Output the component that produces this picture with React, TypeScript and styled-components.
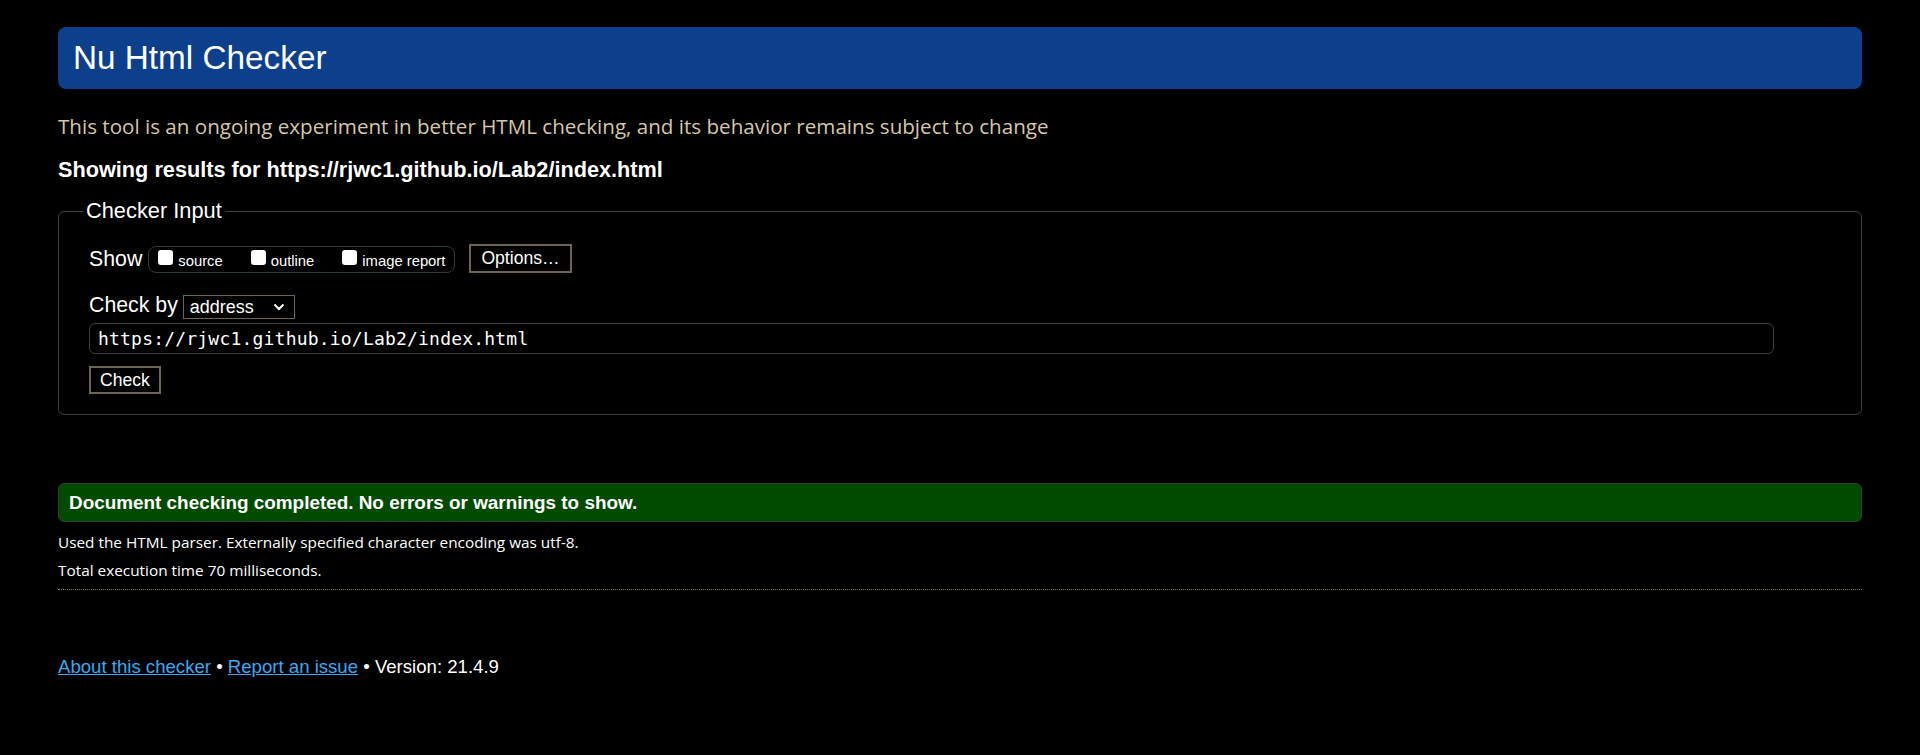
import React from "react";
import styled, { createGlobalStyle } from "styled-components";

const GlobalStyle = createGlobalStyle`
  html, body {
    margin: 0;
    padding: 0;
    background: #000;
  }
  body {
    font-family: "Liberation Sans", Arial, sans-serif;
    color: #fff;
  }
`;

const options = ["source", "outline", "image report"];

const App: React.FC = () => {
  return (
    <Page>
      <GlobalStyle />
      <Header>
        <Title>Nu Html Checker</Title>
      </Header>
      <Intro>
        This tool is an ongoing experiment in better HTML checking, and its
        behavior remains subject to change
      </Intro>
      <ResultsFor>Showing results for https://rjwc1.github.io/Lab2/index.html</ResultsFor>

      <InputFieldset>
        <Legend>Checker Input</Legend>
        <Row>
          <RowLabel>Show</RowLabel>
          <ShowGroup>
            {options.map((opt) => (
              <ShowOption key={opt}>
                <Box />
                <OptionText>{opt}</OptionText>
              </ShowOption>
            ))}
          </ShowGroup>
          <OptionsButton>Options…</OptionsButton>
        </Row>
        <Row $top={18}>
          <RowLabel>Check by</RowLabel>
          <Select>
            <span>address</span>
            <svg width="12" height="8" viewBox="0 0 12 8">
              <path d="M1.5 1.5 L6 6 L10.5 1.5" fill="none" stroke="#fff" strokeWidth="2" />
            </svg>
          </Select>
        </Row>
        <UrlInput>https://rjwc1.github.io/Lab2/index.html</UrlInput>
        <CheckButton>Check</CheckButton>
      </InputFieldset>

      <SuccessBar>Document checking completed. No errors or warnings to show.</SuccessBar>
      <Details>Used the HTML parser. Externally specified character encoding was utf-8.</Details>
      <Details $top={8}>Total execution time 70 milliseconds.</Details>
      <Rule />

      <Footer>
        <FooterLink>About this checker</FooterLink> • <FooterLink>Report an issue</FooterLink> •
        Version: 21.4.9
      </Footer>
    </Page>
  );
};

const Page = styled.div`
  padding: 27px 58px 40px;
  min-height: 755px;
  box-sizing: border-box;
  background: #000;
`;

const Header = styled.div`
  height: 62px;
  background: #0c3f8c;
  border-radius: 8px;
  padding-left: 15px;
  display: flex;
  align-items: center;
`;

const Title = styled.h1`
  margin: 0;
  font-size: 33.3px;
  font-weight: 400;
  line-height: 62px;
  color: #fff;
`;

const Intro = styled.p`
  margin: 25px 0 0;
  font-family: "Open Sans", "Liberation Sans", sans-serif;
  font-size: 20.6px;
  line-height: 24px;
  color: #d6c7a8;
`;

const ResultsFor = styled.p`
  margin: 19px 0 0;
  font-size: 21.7px;
  line-height: 26px;
  font-weight: 700;
`;

const InputFieldset = styled.fieldset`
  margin: 16px 0 0;
  padding: 21px 30px 20px;
  border: 1px solid #3a3f44;
  border-radius: 6px;
  min-width: 0;
`;

const Legend = styled.legend`
  padding: 0 3px;
  margin-left: -6px;
  font-size: 21.8px;
  line-height: 24px;
`;

const Row = styled.div<{ $top?: number }>`
  display: flex;
  align-items: center;
  margin-top: ${({ $top }) => $top ?? 0}px;
`;

const RowLabel = styled.span`
  font-size: 21.3px;
  line-height: 24px;
  margin-right: 6px;
`;

const ShowGroup = styled.div`
  display: flex;
  align-items: center;
  gap: 28px;
  height: 25px;
  padding: 0 9px;
  border: 1px solid #2f3a3a;
  border-radius: 8px;
  margin-right: 14px;
  margin-top: 2px;
`;

const ShowOption = styled.label`
  display: flex;
  align-items: center;
`;

const Box = styled.span`
  width: 15px;
  height: 15px;
  background: #fff;
  border-radius: 3px;
  margin-right: 5px;
  margin-top: -4px;
`;

const OptionText = styled.span`
  font-size: 14.8px;
  line-height: 18px;
  margin-top: 2px;
`;

const OptionsButton = styled.button`
  height: 29px;
  padding: 0 10px;
  background: #000;
  color: #fff;
  border: 2px solid #6e6453;
  font-family: "Liberation Sans", Arial, sans-serif;
  font-size: 17.6px;
  cursor: pointer;
`;

const Select = styled.div`
  width: 112px;
  height: 24px;
  box-sizing: border-box;
  border: 1px solid #6e6453;
  display: flex;
  align-items: center;
  justify-content: space-between;
  padding: 0 9px 0 6px;
  font-size: 18px;
  margin-left: -1px;
  margin-top: 4px;
`;

const UrlInput = styled.div`
  margin-top: 4px;
  width: 1685px;
  height: 31px;
  box-sizing: border-box;
  border: 1px solid #3a3f44;
  border-radius: 6px;
  padding: 0 8px;
  display: flex;
  align-items: center;
  font-family: "DejaVu Sans Mono", monospace;
  font-size: 18px;
  letter-spacing: 0.2px;
`;

const CheckButton = styled.button`
  display: block;
  margin-top: 12px;
  height: 28px;
  padding: 0 9px;
  background: #000;
  color: #fff;
  border: 2px solid #6e6453;
  font-family: "Liberation Sans", Arial, sans-serif;
  font-size: 17.6px;
  cursor: pointer;
`;

const SuccessBar = styled.div`
  margin-top: 68px;
  height: 39px;
  box-sizing: border-box;
  background: #004b00;
  border: 1px solid #2f3a3a;
  border-radius: 6px;
  padding-left: 10px;
  display: flex;
  align-items: center;
  font-size: 18.9px;
  font-weight: 700;
`;

const Details = styled.p<{ $top?: number }>`
  margin: ${({ $top }) => $top ?? 10}px 0 0;
  font-family: "Open Sans", "Liberation Sans", sans-serif;
  font-size: 15.35px;
  line-height: 20px;
`;

const Rule = styled.div`
  margin-top: 9px;
  border-top: 1px dotted #8a7b5c;
`;

const Footer = styled.p`
  margin: 66px 0 0;
  font-size: 18.6px;
  line-height: 22px;
`;

const FooterLink = styled.a`
  color: #3aa8f2;
  text-decoration: underline;
  cursor: pointer;
`;

export default App;
